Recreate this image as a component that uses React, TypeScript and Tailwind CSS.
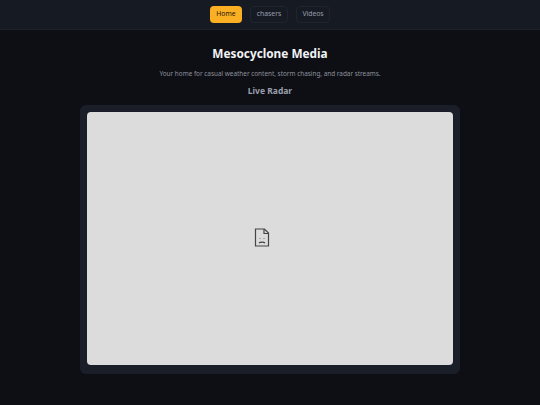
export default function App() {
  return (
    <div className="min-h-[405px] bg-[#0d0f14] text-white font-['Noto_Sans',sans-serif]">
      <nav className="h-[30px] bg-[#161a22] border-b border-[#1e222b] flex justify-center items-start pt-[6px] gap-2">
        <a className="h-[17px] w-[32px] rounded-[4px] bg-[#fbb024] text-[#1a1408] text-[6.8px] flex items-center justify-center">Home</a>
        <a className="h-[17px] w-[38px] rounded-[4px] bg-[#161a22] border border-[#20242e] text-[#9a9fae] text-[6.8px] flex items-center justify-center">chasers</a>
        <a className="h-[17px] w-[34px] rounded-[4px] bg-[#161a22] border border-[#20242e] text-[#9a9fae] text-[6.8px] flex items-center justify-center">Videos</a>
      </nav>
      <main className="flex flex-col items-center">
        <h1 className="mt-[14px] text-[11.8px] leading-[18px] font-bold text-[#f1f2f5]">Mesocyclone Media</h1>
        <p className="mt-[7px] text-[6.4px] leading-[10px] text-[#8f919c]">Your home for casual weather content, storm chasing, and radar streams.</p>
        <h2 className="mt-[6px] text-[8.5px] leading-[12px] font-bold text-[#9a9fae]">Live Radar</h2>
        <div className="mt-[8px] w-[380px] h-[269px] bg-[#1a1e28] rounded-[6px] p-[7px] pb-[9px]">
          <div className="w-full h-full bg-[#dcdcdc] rounded-[4px] flex items-center justify-center">
            <svg className="mr-[16px] mb-[2px]" width="16" height="19" viewBox="0 0 16 19" fill="none" stroke="#444444" strokeWidth="1.2">
              <path d="M1.5 1h9l4 4v13h-13z" />
              <path d="M10 1v4.5h4.5" />
              <path d="M5 15c1.2-1.3 4.8-1.3 6 0" />
              <path d="M5.5 10.5h1M9.5 10.5h1" stroke="#777777" />
            </svg>
          </div>
        </div>
      </main>
    </div>
  );
}
